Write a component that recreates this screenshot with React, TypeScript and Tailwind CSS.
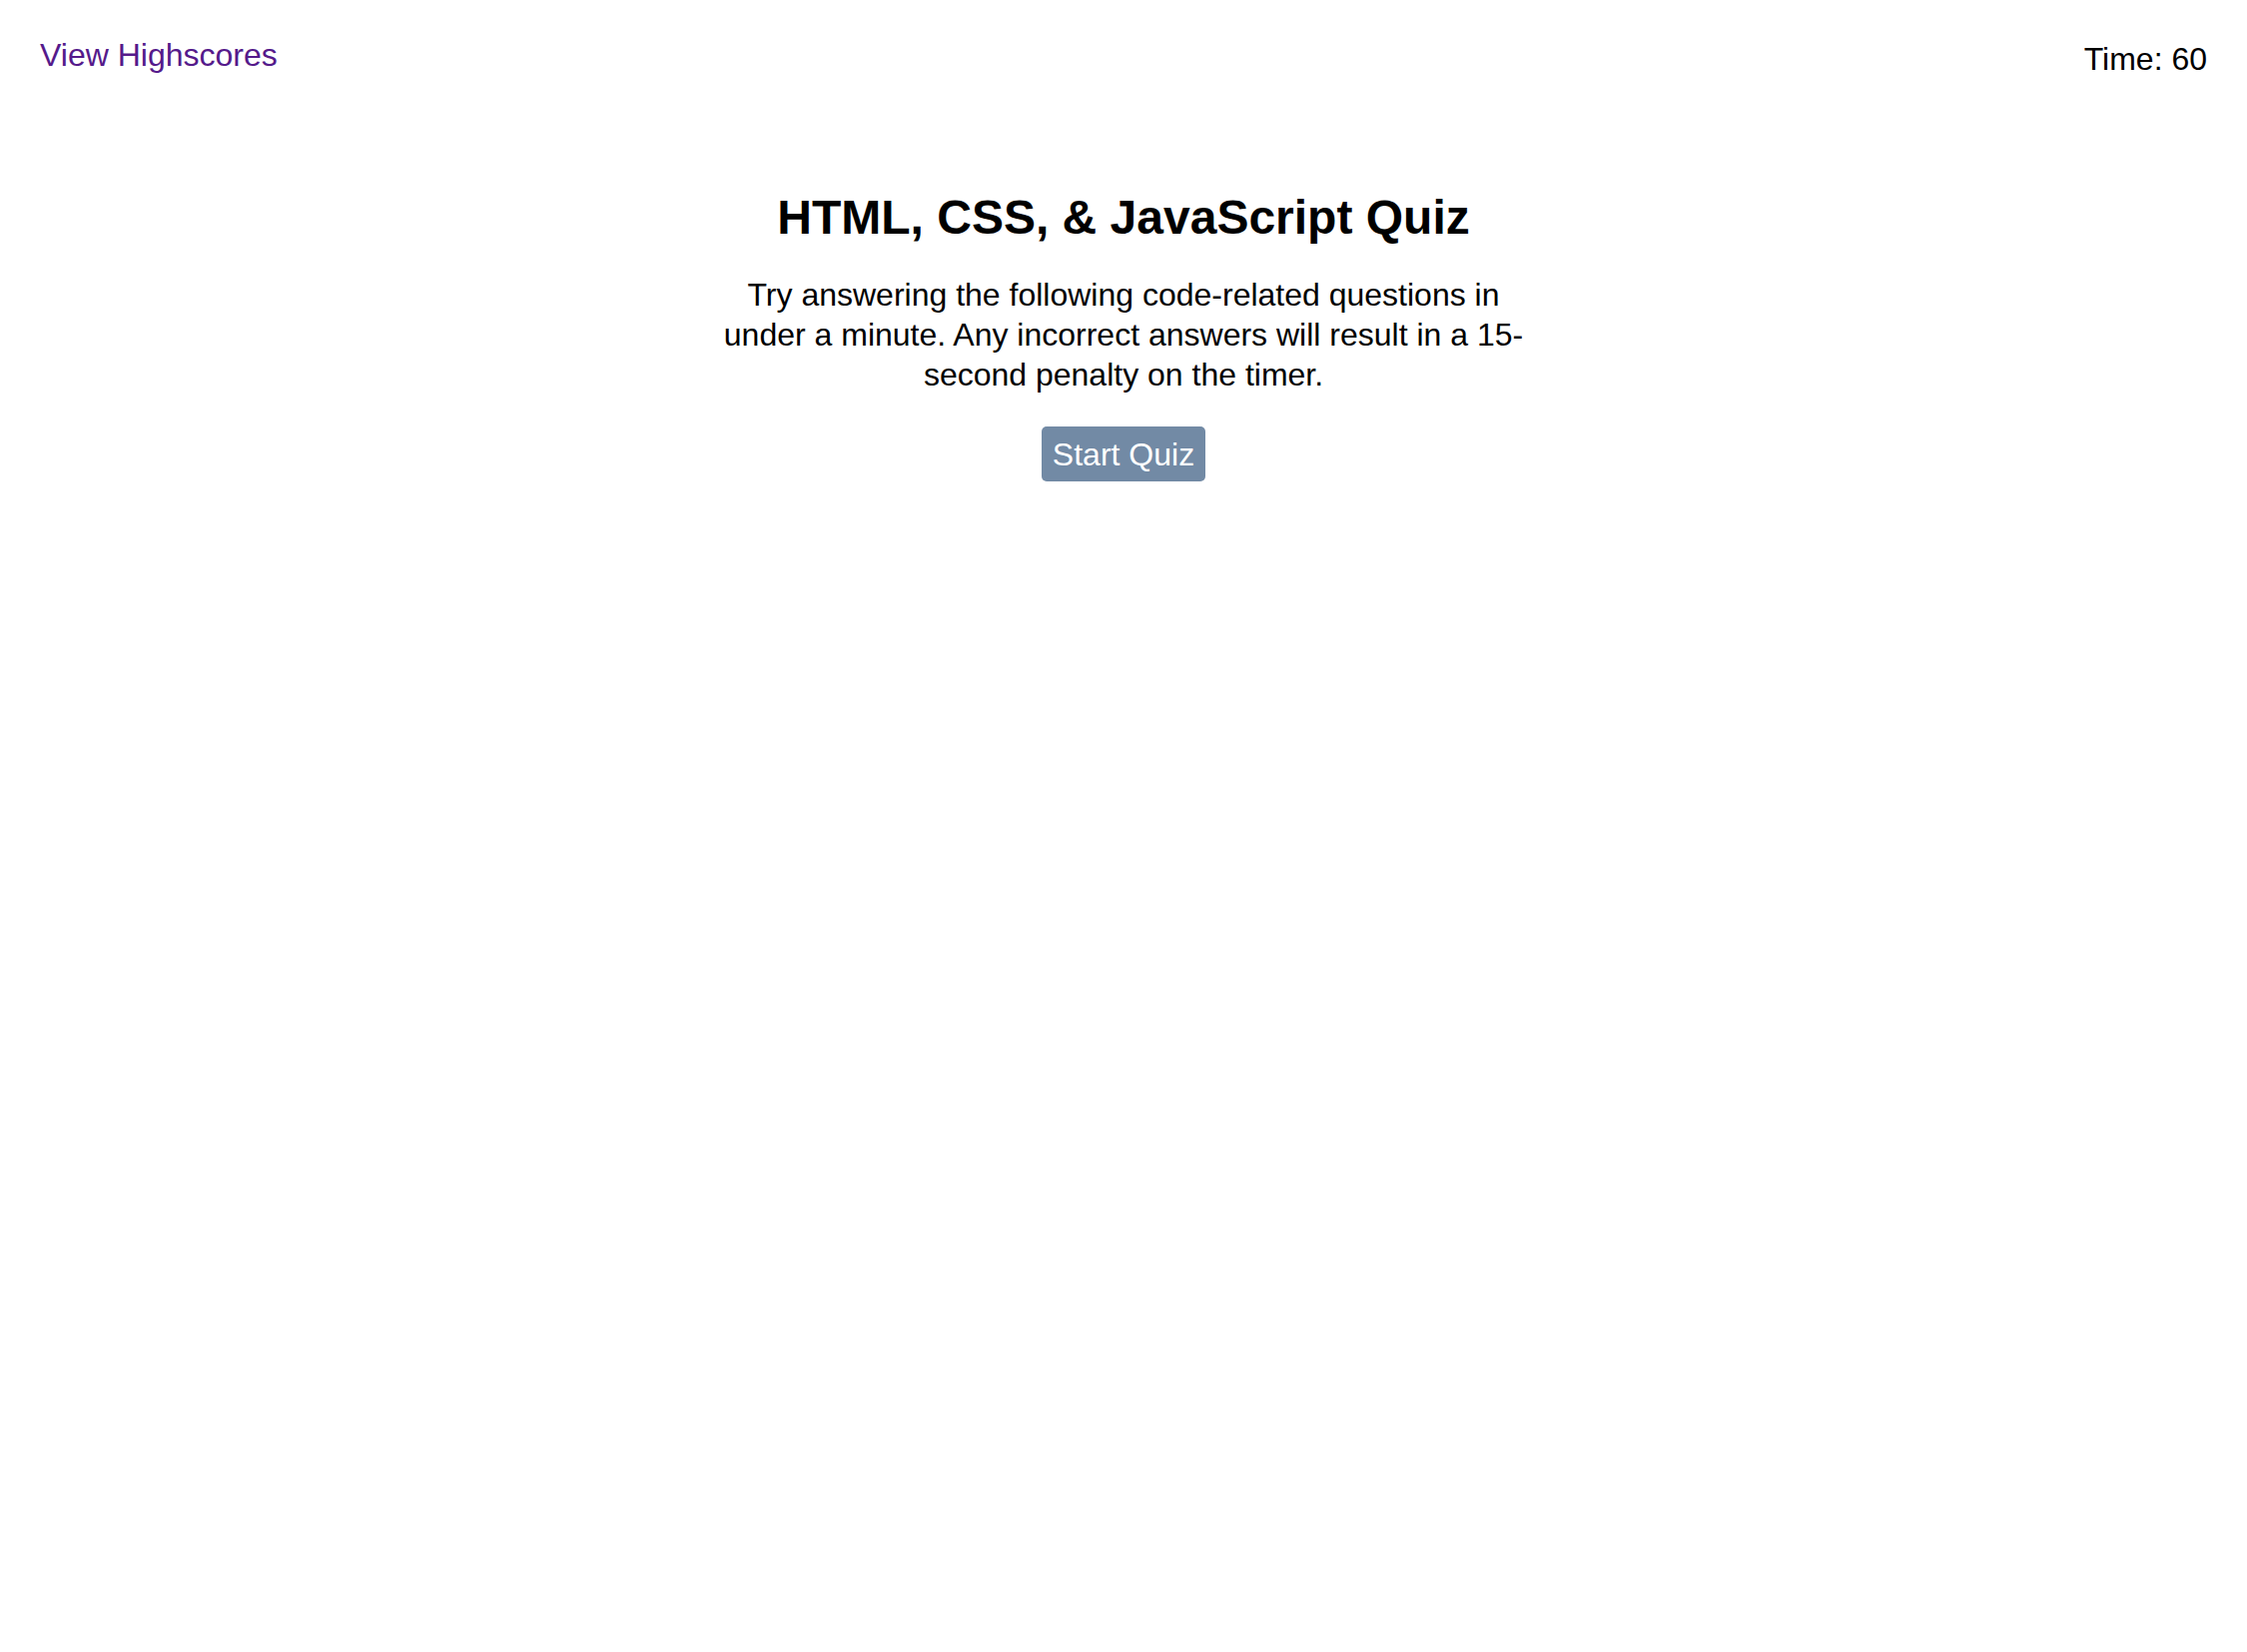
import { useState } from "react";

export default function App() {
    const [time] = useState(60);

    return (
        <div className="min-h-screen bg-white text-black font-['Liberation_Sans',Arial,sans-serif]">
            {/* Header */}
            <header className="flex justify-between items-start pt-[31px] pl-[40px] pr-[40px]">
                <a href="#highscores" className="text-[32px] text-[#551a8b]">
                    View Highscores
                </a>
                <div className="mt-[4px] text-[32px]">Time: {time}</div>
            </header>

            {/* Intro */}
            <main className="flex flex-col items-center mt-[107px]">
                <h1 className="text-[48px] leading-[56px] font-bold">HTML, CSS, &amp; JavaScript Quiz</h1>
                <p className="mt-[29px] w-[820px] text-center text-[32px] leading-[40px]">
                    Try answering the following code-related questions in under a minute. Any incorrect answers will result in a 15-second penalty on the timer.
                </p>
                <button className="mt-[32px] h-[55px] px-[11px] flex items-center rounded-[5px] bg-[#728aa5] text-white text-[32px]">
                    Start Quiz
                </button>
            </main>
        </div>
    );
}
